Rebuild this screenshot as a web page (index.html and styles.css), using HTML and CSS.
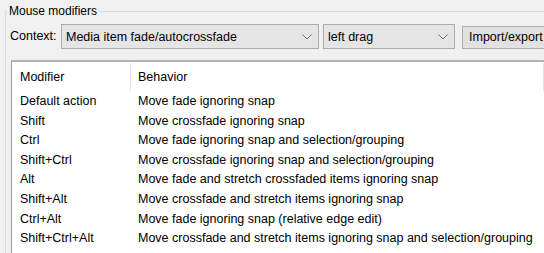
FILE: index.html
```html
<!DOCTYPE html>
<html>
<head>
<meta charset="utf-8">
<link rel="stylesheet" href="styles.css">
</head>
<body>
<div class="frame">
<fieldset class="group">
  <legend class="caption">Mouse modifiers</legend>
  <div class="context-row">
    <span class="label">Context:</span>
    <div class="combo combo-context">
      <span class="combo-text">Media item fade/autocrossfade</span>
      <svg class="chev" width="10" height="6" viewBox="0 0 10 6"><polyline points="0.5,0.5 5,5 9.5,0.5" fill="none" stroke="#6d6d6d" stroke-width="1"/></svg>
    </div>
    <div class="combo combo-action">
      <span class="combo-text">left drag</span>
      <svg class="chev" width="10" height="6" viewBox="0 0 10 6"><polyline points="0.5,0.5 5,5 9.5,0.5" fill="none" stroke="#6d6d6d" stroke-width="1"/></svg>
    </div>
    <div class="button">Import/export</div>
  </div>
  <div class="list">
    <div class="list-header">
      <div class="hcell col1">Modifier</div>
      <div class="hcell col2">Behavior</div>
    </div>
    <div class="rows">
      <div class="row"><span class="c1">Default action</span><span class="c2">Move fade ignoring snap</span></div>
      <div class="row"><span class="c1">Shift</span><span class="c2">Move crossfade ignoring snap</span></div>
      <div class="row"><span class="c1">Ctrl</span><span class="c2">Move fade ignoring snap and selection/grouping</span></div>
      <div class="row"><span class="c1">Shift+Ctrl</span><span class="c2">Move crossfade ignoring snap and selection/grouping</span></div>
      <div class="row"><span class="c1">Alt</span><span class="c2">Move fade and stretch crossfaded items ignoring snap</span></div>
      <div class="row"><span class="c1">Shift+Alt</span><span class="c2">Move crossfade and stretch items ignoring snap</span></div>
      <div class="row"><span class="c1">Ctrl+Alt</span><span class="c2">Move fade ignoring snap (relative edge edit)</span></div>
      <div class="row"><span class="c1">Shift+Ctrl+Alt</span><span class="c2">Move crossfade and stretch items ignoring snap and selection/grouping</span></div>
    </div>
  </div>
</fieldset>
</div>
</body>
</html>
```
FILE: styles.css
```css
html, body {
  margin: 0;
  padding: 0;
  background: #f0f0f0;
  font-family: "Liberation Sans", Arial, sans-serif;
  font-size: 12.5px;
  color: #000;
}
.frame {
  width: 544px;
  height: 253px;
  overflow: hidden;
}
.group {
  margin: 4px 0 0 5px;
  padding: 6px 0 0 0;
  border: none;
  border-top: 1px solid #dcdcdc;
  border-left: 1px solid #dcdcdc;
  min-width: 0;
  width: 600px;
}
.caption {
  padding: 0 2px;
  margin-left: 1px;
  font-size: 12px;
  line-height: 14px;
}
.context-row {
  display: flex;
  align-items: flex-start;
  padding-left: 4px;
  height: 25px;
  white-space: nowrap;
}
.label {
  width: 51px;
  line-height: 24px;
  flex: none;
}
.combo {
  box-sizing: border-box;
  height: 25px;
  background: #e5e5e5;
  border: 1px solid #acacac;
  display: flex;
  align-items: center;
  flex: none;
  padding-left: 4px;
  padding-right: 6px;
}
.combo-text {
  flex: 1;
}
.combo-context {
  width: 258px;
}
.combo-action {
  width: 132px;
  margin-left: 4px;
}
.chev {
  flex: none;
}
.button {
  box-sizing: border-box;
  margin-left: 7px;
  margin-top: 2px;
  height: 23px;
  width: 100px;
  flex: none;
  background: #e1e1e1;
  border: 1px solid #adadad;
  padding-left: 6px;
  line-height: 21px;
}
.list {
  margin: 11px 0 0 5px;
  background: #fff;
  border-top: 2px solid #b5b5bd;
  border-left: 1px solid #a0a0a0;
  height: 200px;
  white-space: nowrap;
}
.list-header {
  display: flex;
  height: 29px;
}
.hcell {
  box-sizing: border-box;
  line-height: 28px;
  margin-top: 1px;
}
.hcell.col1 {
  width: 119px;
  padding-left: 8px;
  border-right: 1px solid #e5e5e5;
}
.hcell.col2 {
  width: 413px;
  padding-left: 7px;
  border-right: 1px solid #e5e5e5;
}
.rows {
  padding-top: 1px;
}
.row {
  display: flex;
  height: 19.6px;
  line-height: 19.6px;
}
.c1 {
  width: 119px;
  padding-left: 8px;
  box-sizing: border-box;
  flex: none;
}
.c2 {
  padding-left: 7px;
}
```
